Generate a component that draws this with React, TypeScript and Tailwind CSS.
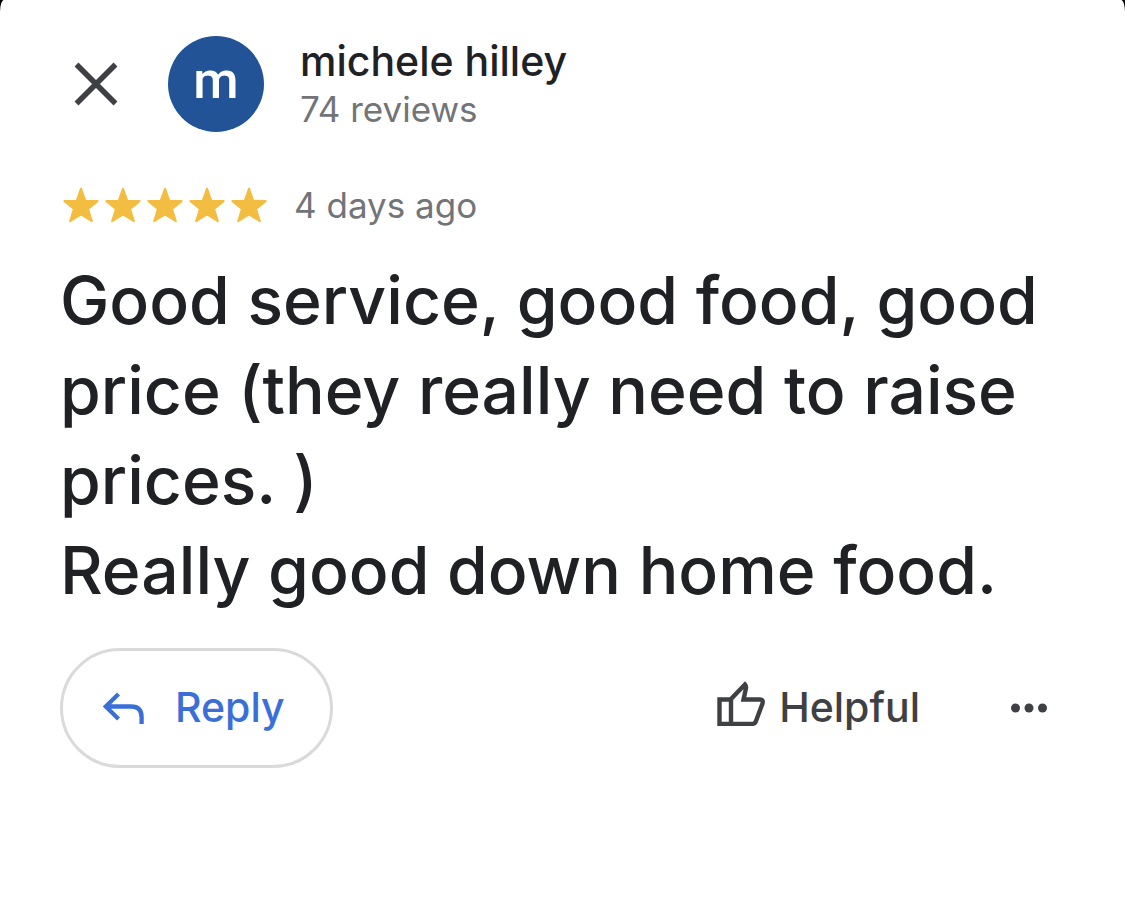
import React from "react";

function CloseIcon() {
  return (
    <svg viewBox="0 0 48 48" className="size-12" fill="none" stroke="currentColor" strokeWidth="5.5" aria-hidden="true">
      <path d="M4.500 4.500 43.500 43.500M43.500 4.500 4.500 43.500" />
    </svg>
  );
}

function StarIcon() {
  return (
    <svg viewBox="0 0 36 36" className="size-9" fill="currentColor" aria-hidden="true">
      <path
        d="M18 1.600 22.200 13.700 34.600 14.100 25 21.900 28.900 34.200 18 27.300 7.100 34.200 11 21.900 1.400 14.100 13.800 13.700Z"
        stroke="currentColor"
        strokeWidth="2"
        strokeLinejoin="round"
      />
    </svg>
  );
}

function ReplyIcon() {
  return (
    <svg viewBox="0 0 42 34" className="h-[34px] w-[42px]" fill="none" stroke="currentColor" strokeWidth="4.3" aria-hidden="true">
      <path d="M15.500 3 2.800 15.500 15.500 28M3 15.500H28Q38.600 15.500 38.600 26V33" />
    </svg>
  );
}

function ThumbIcon() {
  return (
    <svg viewBox="0 5 48 48" className="size-12 overflow-visible" fill="none" stroke="currentColor" strokeWidth="4.4" aria-hidden="true">
      <path d="M2.500 20.500H13.500L28 5.500C29.400 7 29.200 8.500 28.800 10L26.500 20.500H43Q46.500 20.500 45.500 24.500L39 42Q38 44.900 35.500 44.900H2.500ZM14 20V45" />
    </svg>
  );
}

function DotsIcon() {
  return (
    <svg viewBox="0 0 36 10" className="h-[10px] w-9" fill="currentColor" aria-hidden="true">
      <circle cx="4.500" cy="5" r="4.500" />
      <circle cx="18" cy="5" r="4.500" />
      <circle cx="31.500" cy="5" r="4.500" />
    </svg>
  );
}

export default function App() {
  return (
    <div className="flex min-h-screen bg-black font-['Inter',sans-serif]">
      <main className="flex-1 bg-white px-[60px] pt-9 pb-10 text-[#202124] [border-radius:4px_4px_0_0/12px_12px_0_0]">
        <header className="flex items-center">
          <button type="button" aria-label="Close" className="ml-3 text-[#3f4043]">
            <CloseIcon />
          </button>
          <div className="ml-12 flex size-24 items-center justify-center rounded-full bg-[#215396] pb-1.5 font-['Roboto',sans-serif] text-[52px] leading-none font-medium text-white">
            m
          </div>
          <div className="ml-9">
            <h1 className="text-[41px] leading-[50px] font-medium">michele hilley</h1>
            <p className="text-[35px] leading-[46px] text-[#737478]">74 reviews</p>
          </div>
        </header>

        <div className="mt-[49px] flex items-center">
          <div role="img" aria-label="5 out of 5 stars" className="ml-[3px] flex gap-[6px] text-[#f3bd42]">
            <StarIcon />
            <StarIcon />
            <StarIcon />
            <StarIcon />
            <StarIcon />
          </div>
          <p className="ml-[27px] text-[35px] leading-[48px] text-[#737478]">4 days ago</p>
        </div>

        <p className="mt-[26px] text-[66px] leading-[90px] font-medium">
          Good service, good food, good price (they really need to raise prices. )
          <br />
          Really good down home food.
        </p>

        <footer className="mt-[33px] flex items-center text-[41px] font-medium">
          <button
            type="button"
            className="flex h-[120px] items-center gap-[30px] rounded-full border-3 border-[#dadada] pr-[45px] pl-10 text-[#3b6fd8]"
          >
            <ReplyIcon />
            Reply
          </button>
          <button type="button" className="ml-auto flex items-center gap-[14px] text-[#3f4043]">
            <ThumbIcon />
            Helpful
          </button>
          <button type="button" aria-label="More options" className="mr-[18px] ml-[91px] text-[#3f4043]">
            <DotsIcon />
          </button>
        </footer>
      </main>
    </div>
  );
}
